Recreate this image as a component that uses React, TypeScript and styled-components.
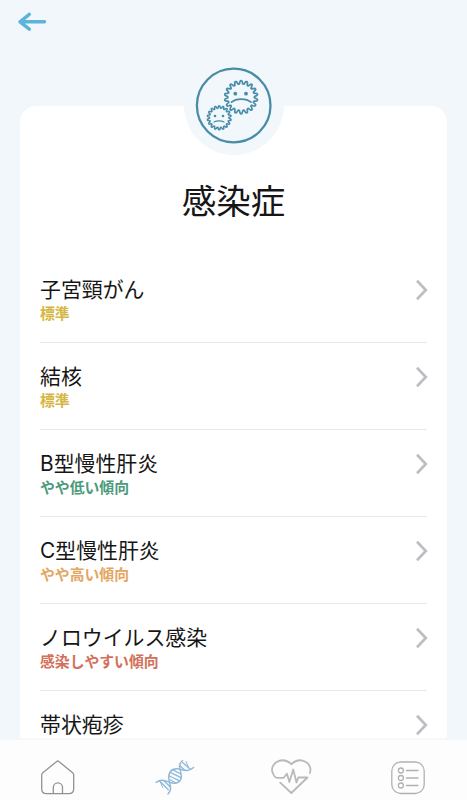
import React from "react";
import styled, { createGlobalStyle } from "styled-components";

const GlobalStyle = createGlobalStyle`
  * { box-sizing: border-box; }
  body {
    margin: 0;
    background: #f2f7fb;
    font-family: Inter, "Noto Sans CJK JP", sans-serif;
    color: #161616;
  }
`;

const Screen = styled.div`
  display: flex;
  flex-direction: column;
  height: 800px;
  overflow: hidden;
  background: #f2f7fb;
`;

const Header = styled.header`
  flex: none;
  height: 56px;
  padding: 11px 0 0 17px;
`;

const BackButton = styled.button`
  display: block;
  padding: 0;
  border: 0;
  background: none;
  line-height: 0;
`;

const Content = styled.main`
  flex: 1;
  min-height: 0;
  overflow: hidden;
  padding: 50px 20px 0;
`;

const Card = styled.section`
  display: flex;
  flex-direction: column;
  height: 900px;
  padding: 0 20px;
  border-radius: 16px;
  background: #fff;
`;

const Emblem = styled.div`
  align-self: center;
  flex: none;
  width: 100px;
  height: 100px;
  margin-top: -51px;
  border-radius: 50%;
  background: #f2f7fb;
`;

const Title = styled.h1`
  margin: 22px 0 0;
  height: 50px;
  line-height: 50px;
  font-size: 34.5px;
  font-weight: 400;
  text-align: center;
`;

const List = styled.ul`
  list-style: none;
  margin: 29px 0 0;
  padding: 0;
`;

const Row = styled.li`
  display: flex;
  justify-content: space-between;
  height: 87px;
  padding-top: 18px;
  border-bottom: 1px solid #e7e8ea;
`;

const Name = styled.div`
  height: 30px;
  padding-top: 1px;
  line-height: 30px;
  font-size: 20.9px;
  white-space: nowrap;
`;

const Status = styled.div<{ $color: string }>`
  height: 20px;
  line-height: 20px;
  font-size: 14.85px;
  font-weight: 700;
  white-space: nowrap;
  color: ${(p) => p.$color};
`;

const Chevron = styled.svg`
  flex: none;
  margin: 5px -1px 0 0;
`;

const NavBar = styled.nav`
  flex: none;
  display: flex;
  justify-content: space-between;
  height: 62px;
  padding: 18px 38px 0;
  border-top: 2px solid #f5f7f9;
  background: #fdfdfd;
`;

const NavButton = styled.button`
  width: 40px;
  height: 40px;
  padding: 0;
  border: 0;
  background: none;
  line-height: 0;

  svg {
    overflow: visible;
  }
`;

const items: { name: string; status?: string; color?: string }[] = [
  { name: "子宮頸がん", status: "標準", color: "#d6b642" },
  { name: "結核", status: "標準", color: "#d6b642" },
  { name: "B型慢性肝炎", status: "やや低い傾向", color: "#4d9b7c" },
  { name: "C型慢性肝炎", status: "やや高い傾向", color: "#e4a663" },
  { name: "ノロウイルス感染", status: "感染しやすい傾向", color: "#d4705a" },
  { name: "帯状疱疹" },
];

/** Closed outline of a round germ with evenly spaced rounded teeth. */
function germPath(cx: number, cy: number, outer: number, inner: number, teeth: number) {
  const points: string[] = [];
  const steps = teeth * 12;
  for (let i = 0; i < steps; i++) {
    const a = (i / steps) * Math.PI * 2;
    const wave = Math.tanh(1.5 * Math.cos(a * teeth)) / Math.tanh(1.5);
    const r = (outer + inner) / 2 + ((outer - inner) / 2) * wave;
    points.push(`${(cx + r * Math.sin(a)).toFixed(2)} ${(cy - r * Math.cos(a)).toFixed(2)}`);
  }
  return `M${points.join("L")}Z`;
}

const GermIcon = () => (
  <svg width="100" height="100" viewBox="0 0 100 100" fill="none" stroke="#478da8" strokeLinecap="round">
    <circle cx="49.7" cy="50.5" r="36.8" strokeWidth="2.3" />
    <path d={germPath(57.1, 42.2, 16.6, 13.2, 18)} strokeWidth="1.7" />
    <path d={germPath(35.2, 62.8, 12, 9.6, 18)} strokeWidth="1.5" fill="#f2f7fb" />
    <path d="M47.5 47.2C52 43 62.5 43 67 47.2" strokeWidth="1.7" />
    <path d="M30 67C32.5 65.6 37.5 65.6 40 67" strokeWidth="1.3" />
    <g fill="#478da8" stroke="none">
      <circle cx="51.3" cy="38.7" r="1.9" />
      <circle cx="62" cy="38.7" r="1.9" />
      <circle cx="31" cy="61" r="1.3" />
      <circle cx="39" cy="61" r="1.3" />
    </g>
  </svg>
);

const HomeIcon = () => (
  <svg width="40" height="40" viewBox="0 0 40 40" fill="none" stroke="#929292" strokeWidth="1.3" strokeLinejoin="round">
    <path d="M18.8 3.4Q19.8 2.6 20.8 3.4L34.6 14.8Q35.7 15.7 35.7 17V31Q35.7 35.6 30.7 35.6H8.5Q3.7 35.6 3.7 31V17Q3.7 15.7 4.8 14.8Z" />
    <path d="M15.3 35.6V29.4A4.6 4.6 0 0 1 24.5 29.4V35.6" />
  </svg>
);

const DnaIcon = () => (
  <svg width="40" height="40" viewBox="0 0 40 40" fill="none" stroke="#8fb9da" strokeWidth="1.5" strokeLinecap="round">
    <g transform="translate(0 1.5)">
      <path d="M1.2 22.8C8 17.5 14 24 19.5 23.8C29.5 23 25.8 13 24.8 9C24 5.5 25 3 27.5 1" />
      <path d="M13 34.5C17 30.5 15.5 27 14.3 22C12.5 13.5 15.5 8.5 24 9.5C30 11 33.5 12.5 38.5 8" />
      <path d="M5 21.8L13.3 30.2M9.4 21.7L15.2 27.5M25 6.2L29.7 10.7M27.6 2.9L35.3 9.8M18.4 10.7L25.8 14.5M15.8 13.2L26.4 18.3M14.5 16.5L24.6 21.4M15 20.2L20.6 23.3" strokeWidth="1.3" />
      <path d="M5.1 22.2L7.7 28M31 2L33.5 8" strokeWidth="1" />
    </g>
  </svg>
);

const HeartIcon = () => (
  <svg width="40" height="40" viewBox="0 0 40 40" fill="none" stroke="#b9b9b9" strokeWidth="1.8" strokeLinecap="round" strokeLinejoin="round">
    <path d="M37.8 15C41.5 5.5 28.5-2.5 19.5 6.2C9-3-3.5 6.5 1 15.5Q2.8 19.8 5 19.8H11.7L14.9 15.8L17.4 24L21.2 11.5L24.5 24.5L26.3 19.5H35.5L19.3 35L8.2 24.6" />
  </svg>
);

const ListIcon = () => (
  <svg width="40" height="40" viewBox="0 0 40 40" fill="none" stroke="#b1b1b1" strokeWidth="1.3" strokeLinecap="round">
    <rect x="2.8" y="4" width="32.4" height="31.5" rx="9" />
    {[12.5, 20, 27.5].map((y) => (
      <g key={y}>
        <circle cx="11.9" cy={y} r="2.5" />
        <path d={`M17.4 ${y}H29`} />
      </g>
    ))}
  </svg>
);

export default function App() {
  return (
    <>
      <GlobalStyle />
      <Screen>
        <Header>
          <BackButton aria-label="戻る">
            <svg width="30" height="22" viewBox="0 0 30 22" fill="none" stroke="#5bb4da" strokeWidth="3.4" strokeLinecap="round" strokeLinejoin="round">
              <path d="M27.5 10.8H3M12.3 3.4L3 10.8L12.3 18.2" />
            </svg>
          </BackButton>
        </Header>
        <Content>
          <Card>
            <Emblem>
              <GermIcon />
            </Emblem>
            <Title>感染症</Title>
            <List>
              {items.map((item) => (
                <Row key={item.name}>
                  <div>
                    <Name>{item.name}</Name>
                    {item.status && <Status $color={item.color ?? "inherit"}>{item.status}</Status>}
                  </div>
                  <Chevron width="13" height="22" viewBox="0 0 13 22" fill="none" stroke="#bdbec3" strokeWidth="2.7">
                    <path d="M2 1.8L10.8 11L2 20.2" />
                  </Chevron>
                </Row>
              ))}
            </List>
          </Card>
        </Content>
        <NavBar>
          <NavButton aria-label="ホーム"><HomeIcon /></NavButton>
          <NavButton aria-label="遺伝子"><DnaIcon /></NavButton>
          <NavButton aria-label="健康"><HeartIcon /></NavButton>
          <NavButton aria-label="一覧"><ListIcon /></NavButton>
        </NavBar>
      </Screen>
    </>
  );
}
